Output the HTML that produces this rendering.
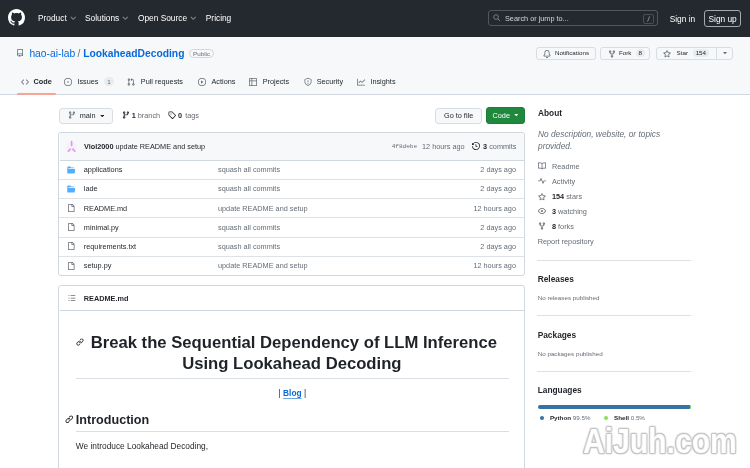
<!DOCTYPE html>
<html><head><meta charset="utf-8">
<style>
*{box-sizing:border-box;margin:0;padding:0}
html,body{width:750px;height:468px;overflow:hidden;background:#fff}
body{font-family:"Liberation Sans",sans-serif;color:#1f2328;position:relative}
#wrap{position:absolute;left:0;top:0;width:750px;height:468px;will-change:transform;filter:blur(0.3px)}
.a{position:absolute;white-space:nowrap}
svg{display:block}
#hdr{position:absolute;left:0;top:0;width:750px;height:37px;background:#24292f}
.nav{color:#fff;font-size:8.33px;top:13.4px}
.caret{position:absolute;top:0}
#rh{position:absolute;left:0;top:37px;width:750px;height:58px;background:#f6f8fa;border-bottom:1px solid #d0d7de}
.tab{font-size:7.3px;color:#1f2328;top:77.4px}
.btn{position:absolute;border:1px solid #d8dde3;background:#f6f8fa;border-radius:3px}
.cnt{position:absolute;background:#e8ebef;border-radius:6px;font-size:6.25px;text-align:center}
.row{position:absolute;left:59px;width:466px;height:19.1px;border-top:1px solid #d8dee4}
.fn{font-size:7.3px;color:#1f2328}
.cm{font-size:7.3px;color:#656d76}
.side{font-size:7.3px;color:#656d76}
.h2s{font-size:8.33px;font-weight:700;color:#1f2328}
.sm{font-size:6.25px;color:#656d76}
.div{position:absolute;left:537px;width:154px;height:1px;background:#dde1e6}
</style></head><body><div id="wrap">
<div id="hdr"></div>
<!-- github logo -->
<svg class="a" style="left:8px;top:9px" width="17" height="17" viewBox="0 0 16 16"><path fill="#fff" d="M8 0c4.42 0 8 3.58 8 8a8.013 8.013 0 0 1-5.45 7.590c-.4.08-.55-.17-.55-.38 0-.27.01-1.13.01-2.2 0-.75-.25-1.23-.54-1.48 1.78-.2 3.65-.88 3.65-3.95 0-.88-.31-1.59-.82-2.15.08-.2.36-1.02-.08-2.12 0 0-.67-.22-2.2.82-.64-.18-1.32-.27-2-.27-.68 0-1.36.09-2 .27-1.53-1.03-2.2-.82-2.2-.82-.44 1.1-.16 1.92-.08 2.12-.51.56-.82 1.28-.82 2.150 0 3.06 1.86 3.75 3.64 3.95-.23.2-.44.55-.51 1.07-.46.21-1.61.55-2.33-.66-.15-.24-.6-.83-1.23-.82-.67.01-.27.38.01.53.34.19.73.9.82 1.13.16.45.68 1.31 2.69.94 0 .67.01 1.3.01 1.49 0 .21-.15.45-.55.38A7.995 7.995 0 0 1 0 8c0-4.42 3.58-8 8-8Z"/></svg>
<span class="a nav" style="left:38px">Product</span>
<span class="a nav" style="left:85px">Solutions</span>
<span class="a nav" style="left:138px">Open Source</span>
<span class="a nav" style="left:205.8px">Pricing</span>

<!-- search -->
<div class="a" style="left:488px;top:10.3px;width:169.5px;height:16px;border:1px solid #4f5760;border-radius:3px"></div>
<span class="a" style="left:505px;top:14px;font-size:7.3px;color:#d0d7de">Search or jump to...</span>
<span class="a" style="left:669.7px;top:13.7px;font-size:8.33px;color:#fff">Sign in</span>
<div class="a" style="left:704.2px;top:9.8px;width:37.2px;height:17.6px;border:1px solid #a3a9b0;border-radius:3px"></div>
<span class="a" style="left:708.5px;top:13.7px;font-size:8.33px;color:#fff">Sign up</span>

<div id="rh"></div>
<span class="a" style="left:29.4px;top:47.7px;font-size:10.3px;color:#0969da">hao-ai-lab</span>
<span class="a" style="left:77.5px;top:47.7px;font-size:10.3px;color:#656d76">/</span>
<span class="a" style="left:83.2px;top:47.7px;font-size:10.3px;color:#0969da;font-weight:700">LookaheadDecoding</span>
<div class="a" style="left:189.4px;top:48.8px;width:24.4px;height:9.6px;border:1px solid #d0d7de;border-radius:5px;font-size:6.25px;color:#656d76;text-align:center;line-height:7.6px">Public</div>

<!-- tabs -->
<span class="a tab" style="left:33.6px;font-weight:700">Code</span>
<div class="a" style="left:16.5px;top:93.4px;width:39.7px;height:1.6px;background:#f4a596;border-radius:1px"></div>
<span class="a tab" style="left:77.4px">Issues</span>
<span class="a tab" style="left:140.8px">Pull requests</span>
<span class="a tab" style="left:211.5px">Actions</span>
<span class="a tab" style="left:262.7px">Projects</span>
<span class="a tab" style="left:316.7px">Security</span>
<span class="a tab" style="left:370.4px">Insights</span>

<!-- main -->
<div class="btn" style="left:58.5px;top:107.5px;width:54px;height:16px"></div>
<span class="a" style="left:79.7px;top:111px;font-size:7.3px;font-weight:400;color:#1f2328">main</span>
<span class="a" style="left:131.7px;top:111px;font-size:7.3px;font-weight:700">1</span>
<span class="a" style="left:137.8px;top:111px;font-size:7.3px;color:#656d76">branch</span>
<span class="a" style="left:178px;top:111px;font-size:7.3px;font-weight:700">0</span>
<span class="a" style="left:185.2px;top:111px;font-size:7.3px;color:#656d76">tags</span>

<div class="btn" style="left:435px;top:107.5px;width:46.5px;height:16px"></div>
<span class="a" style="left:444px;top:110.9px;font-size:7.3px">Go to file</span>
<div class="btn" style="left:486px;top:107px;width:39px;height:16.5px;background:#1f883d;border-color:#1b7f37"></div>
<span class="a" style="left:492.5px;top:110.9px;font-size:7.3px;color:#fff">Code</span>

<!-- commit box -->
<div class="a" style="left:58px;top:132.4px;width:467px;height:143.6px;border:1px solid #d0d7de;border-radius:3px"></div>
<div class="a" style="left:59.5px;top:133.4px;width:464.5px;height:27px;background:#f6f8fa;border-radius:3px 3px 0 0"></div>
<span class="a" style="left:84px;top:141.8px;font-size:7.3px;font-weight:700">Viol2000</span>
<span class="a" style="left:115.5px;top:141.8px;font-size:7.3px">update README and setup</span>
<span class="a" style="left:391.7px;top:142.6px;font-size:6.05px;color:#656d76;font-family:'Liberation Mono',monospace">4f8debe</span>
<span class="a" style="left:422px;top:141.8px;font-size:7.3px;color:#656d76">12 hours ago</span>
<span class="a" style="left:483px;top:141.8px;font-size:7.3px;font-weight:700">3</span>
<span class="a" style="left:489.2px;top:141.8px;font-size:7.3px;color:#656d76">commits</span>


<!-- nav carets -->
<svg class="a" style="left:69.7px;top:16.3px" width="6.6" height="4.4" viewBox="0 0 12 8"><path d="M1.5 1.5l4.5 4.5 4.5-4.5" fill="none" stroke="#7d858e" stroke-width="2"/></svg>
<svg class="a" style="left:122.2px;top:16.3px" width="6.6" height="4.4" viewBox="0 0 12 8"><path d="M1.5 1.5l4.5 4.5 4.5-4.5" fill="none" stroke="#7d858e" stroke-width="2"/></svg>
<svg class="a" style="left:190.2px;top:16.3px" width="6.6" height="4.4" viewBox="0 0 12 8"><path d="M1.5 1.5l4.5 4.5 4.5-4.5" fill="none" stroke="#7d858e" stroke-width="2"/></svg>
<!-- search icon -->
<svg class="a" style="left:493px;top:14.3px" width="7.5" height="7.5" viewBox="0 0 16 16"><circle cx="6.5" cy="6.5" r="5" fill="none" stroke="#8c959f" stroke-width="1.6"/><path d="M10.3 10.3l4.5 4.5" stroke="#8c959f" stroke-width="1.8"/></svg>
<div class="a" style="left:643px;top:14.3px;width:11px;height:9.3px;border:1px solid #474f58;border-radius:2px"></div>
<svg class="a" style="left:646px;top:16px" width="5" height="6" viewBox="0 0 5 6"><path d="M3.6 0.4L1.6 5.6" stroke="#8c959f" stroke-width="0.9"/></svg>
<!-- repo icon -->
<svg class="a" style="left:16.2px;top:49.3px" width="8" height="8" viewBox="0 0 16 16"><path fill="#656d76" d="M2 2.5A2.5 2.5 0 0 1 4.5 0h8.75a.75.75 0 0 1 .75.75v12.5a.75.75 0 0 1-.75.75h-2.5a.75.75 0 0 1 0-1.5h1.75v-2h-8a1 1 0 0 0-.714 1.700.75.75 0 1 1-1.072 1.050A2.495 2.495 0 0 1 2 11.500Zm10.5-1h-8a1 1 0 0 0-1 1v6.708A2.486 2.486 0 0 1 4.500 9h8ZM5 12.25a.25.25 0 0 1 .25-.25h3.5a.25.25 0 0 1 .25.25v3.250a.25.25 0 0 1-.4.200l-1.450-1.087a.249.249 0 0 0-.3 0L5.400 15.700a.25.25 0 0 1-.4-.2Z"/></svg>
<!-- right repo buttons -->
<div class="btn" style="left:536.2px;top:47px;width:59.5px;height:12.5px;border-radius:3px"></div>
<svg class="a" style="left:543.2px;top:49.5px" width="8" height="8" viewBox="0 0 16 16"><path fill="#656d76" d="M8 16a2 2 0 0 0 1.985-1.750c.017-.137-.097-.25-.235-.25h-3.500c-.138 0-.252.113-.235.250A2 2 0 0 0 8 16ZM3 5a5 5 0 0 1 10 0v2.947c0 .05.015.098.042.139l1.703 2.555A1.519 1.519 0 0 1 13.482 13H2.518a1.516 1.516 0 0 1-1.263-2.360l1.703-2.554A.255.255 0 0 0 3 7.947Zm5-3.500A3.500 3.500 0 0 0 4.500 5v2.947c0 .346-.102.683-.294.970l-1.703 2.556a.017.017 0 0 0-.003.010l.001.006c0 .002.002.004.004.006l.006.004.007.001h10.964l.007-.001.006-.004.004-.006.001-.007a.017.017 0 0 0-.003-.010l-1.703-2.554a1.745 1.745 0 0 1-.294-.970V5A3.500 3.500 0 0 0 8 1.500Z"/></svg>
<span class="a" style="left:555px;top:48.6px;font-size:6.25px;font-weight:400;color:#1f2328">Notifications</span>
<div class="btn" style="left:600.2px;top:47px;width:50.3px;height:12.5px"></div>
<svg class="a" style="left:607.7px;top:49.5px" width="8" height="8" viewBox="0 0 16 16"><path fill="#656d76" d="M5 5.372v.878c0 .414.336.75.75.75h4.500a.75.75 0 0 0 .75-.75v-.878a2.250 2.250 0 1 1 1.500 0v.878a2.250 2.250 0 0 1-2.250 2.250h-1.500v2.128a2.251 2.251 0 1 1-1.500 0V8.500h-1.500A2.250 2.250 0 0 1 3.500 6.250v-.878a2.250 2.250 0 1 1 1.500 0ZM5 3.250a.75.75 0 1 0-1.500 0 .75.75 0 0 0 1.500 0Zm6.750.75a.75.75 0 1 0 0-1.500.75.75 0 0 0 0 1.500Zm-3 8.750a.75.75 0 1 0-1.500 0 .75.75 0 0 0 1.500 0Z"/></svg>
<span class="a" style="left:618.9px;top:48.6px;font-size:6.25px;font-weight:400;color:#1f2328">Fork</span>
<div class="cnt" style="left:635.6px;top:48.8px;width:9.4px;height:8.5px;line-height:8.5px;color:#1f2328">8</div>
<div class="btn" style="left:656px;top:47px;width:77.3px;height:12.5px"></div>
<div class="a" style="left:716px;top:47px;width:1px;height:12.5px;background:#d8dde3"></div>
<svg class="a" style="left:663.4px;top:49.5px" width="8" height="8" viewBox="0 0 16 16"><path fill="#656d76" d="M8 .25a.75.75 0 0 1 .673.418l1.882 3.815 4.210.612a.75.75 0 0 1 .416 1.279l-3.046 2.970.719 4.192a.751.751 0 0 1-1.088.791L8 12.347l-3.766 1.980a.75.75 0 0 1-1.088-.790l.720-4.194L.818 6.374a.75.75 0 0 1 .416-1.280l4.210-.611L7.327.668A.75.75 0 0 1 8 .25Zm0 2.445L6.615 5.500a.75.75 0 0 1-.564.410l-3.097.45 2.240 2.184a.75.75 0 0 1 .216.664l-.528 3.084 2.769-1.456a.75.75 0 0 1 .698 0l2.770 1.456-.530-3.084a.75.75 0 0 1 .216-.664l2.240-2.183-3.096-.45a.75.75 0 0 1-.564-.41L8 2.694Z"/></svg>
<span class="a" style="left:676.6px;top:48.6px;font-size:6.25px;font-weight:400;color:#1f2328">Star</span>
<div class="cnt" style="left:692.8px;top:48.8px;width:16.1px;height:8.5px;line-height:8.5px;color:#1f2328">154</div>
<svg class="a" style="left:722.5px;top:52.2px" width="4" height="2.5" viewBox="0 0 10 6"><path d="M0 0h10L5 5.5z" fill="#656d76"/></svg>

<!-- tab icons -->
<svg class="a" style="left:20.8px;top:77.8px" width="8" height="8" viewBox="0 0 16 16"><path fill="#656d76" d="m11.28 3.22 4.25 4.25a.75.75 0 0 1 0 1.06l-4.25 4.25a.749.749 0 0 1-1.275-.326.749.749 0 0 1 .215-.734L13.94 8l-3.72-3.720a.749.749 0 0 1 .326-1.275.749.749 0 0 1 .734.215Zm-6.560 0a.751.751 0 0 1 1.042.018.751.751 0 0 1 .018 1.042L2.06 8l3.720 3.720a.749.749 0 0 1-.326 1.275.749.749 0 0 1-.734-.215L.47 8.530a.75.75 0 0 1 0-1.060Z"/></svg>
<svg class="a" style="left:64px;top:77.8px" width="8" height="8" viewBox="0 0 16 16"><path fill="#656d76" d="M8 9.5a1.5 1.5 0 1 0 0-3 1.5 1.5 0 0 0 0 3Z"/><path fill="#656d76" d="M8 0a8 8 0 1 1 0 16A8 8 0 0 1 8 0ZM1.5 8a6.5 6.5 0 1 0 13 0 6.5 6.5 0 0 0-13 0Z"/></svg>
<div class="cnt" style="left:104.2px;top:77.4px;width:9.4px;height:9px;line-height:9px;color:#656d76;background:#e8ebef">1</div>
<svg class="a" style="left:127px;top:77.8px" width="8" height="8" viewBox="0 0 16 16"><path fill="#656d76" d="M1.5 3.25a2.25 2.25 0 1 1 3 2.122v5.256a2.251 2.251 0 1 1-1.5 0V5.372A2.250 2.250 0 0 1 1.5 3.250Zm5.677-.177L9.573.677A.25.25 0 0 1 10 .854V2.500h1A2.500 2.500 0 0 1 13.500 5v5.628a2.251 2.251 0 1 1-1.500 0V5a1 1 0 0 0-1-1h-1v1.646a.25.25 0 0 1-.427.177L7.177 3.427a.25.25 0 0 1 0-.354ZM3.750 2.500a.75.75 0 1 0 0 1.500.75.75 0 0 0 0-1.500Zm0 9.500a.75.75 0 1 0 0 1.500.75.75 0 0 0 0-1.500Zm8.250.75a.75.75 0 1 0 1.500 0 .75.75 0 0 0-1.500 0Z"/></svg>
<svg class="a" style="left:197.7px;top:77.8px" width="8" height="8" viewBox="0 0 16 16"><path fill="#656d76" d="M8 0a8 8 0 1 1 0 16A8 8 0 0 1 8 0ZM1.5 8a6.5 6.5 0 1 0 13 0 6.5 6.5 0 0 0-13 0Zm4.879-2.773 4.264 2.559a.25.25 0 0 1 0 .428l-4.264 2.559A.25.25 0 0 1 6 10.559V5.442a.25.25 0 0 1 .379-.215Z"/></svg>
<svg class="a" style="left:249.2px;top:77.8px" width="8" height="8" viewBox="0 0 16 16"><path fill="#656d76" d="M0 1.75C0 .784.784 0 1.75 0h12.5C15.216 0 16 .784 16 1.75v12.5A1.75 1.75 0 0 1 14.25 16H1.75A1.75 1.75 0 0 1 0 14.25ZM6.5 6.5v8h7.75a.25.25 0 0 0 .25-.25V6.5Zm8-1.5V1.75a.25.25 0 0 0-.25-.25H6.5V5Zm-13 1.5v7.75c0 .138.112.25.25.25H5v-8ZM5 5V1.5H1.75a.25.25 0 0 0-.25.25V5Z"/></svg>
<svg class="a" style="left:303.5px;top:77.8px" width="8" height="8" viewBox="0 0 16 16"><path fill="#656d76" d="M7.467.133a1.748 1.748 0 0 1 1.066 0l5.250 1.680A1.750 1.750 0 0 1 15 3.480V7c0 1.566-.320 3.182-1.303 4.682-.983 1.498-2.585 2.813-5.032 3.855a1.697 1.697 0 0 1-1.330 0c-2.447-1.042-4.049-2.357-5.032-3.855C1.320 10.182 1 8.566 1 7V3.480a1.755 1.755 0 0 1 1.217-1.667Zm.61 1.429a.250.250 0 0 0-.153 0l-5.250 1.680a.250.250 0 0 0-.174.238V7c0 1.358.275 2.666 1.057 3.860.784 1.194 2.121 2.340 4.366 3.297a.196.196 0 0 0 .154 0c2.245-.956 3.582-2.104 4.366-3.298C13.225 9.666 13.500 8.360 13.500 7V3.480a.251.251 0 0 0-.174-.237l-5.250-1.680ZM8.750 4.750v3a.75.75 0 0 1-1.500 0v-3a.75.75 0 0 1 1.500 0ZM9 10.500a1 1 0 1 1-2 0 1 1 0 0 1 2 0Z"/></svg>
<svg class="a" style="left:356.6px;top:77.8px" width="8" height="8" viewBox="0 0 16 16"><path fill="#656d76" d="M1.5 1.75V13.500h13.750a.75.75 0 0 1 0 1.500H.75a.75.75 0 0 1-.75-.75V1.750a.75.75 0 0 1 1.500 0Zm14.280 2.530-5.250 5.250a.75.75 0 0 1-1.060 0L7 7.060 4.280 9.780a.751.751 0 0 1-1.042-.018.751.751 0 0 1-.018-1.042l3.250-3.250a.75.75 0 0 1 1.060 0L10 7.940l4.720-4.720a.751.751 0 0 1 1.042.018.751.751 0 0 1 .018 1.042Z"/></svg>


<!-- rows -->
<div class="a" style="left:59.5px;top:160.4px;width:464.5px;height:1px;background:#d0d7de"></div>
<svg class="a" style="left:67px;top:165.7px" width="8.5" height="8" viewBox="0 0 16 16"><path fill="#54aeff" d="M.513 1.513A1.750 1.750 0 0 1 1.750 1h3.500c.550 0 1.069.260 1.400.700l.900 1.200a.25.25 0 0 0 .2.1H13a1 1 0 0 1 1 1v.5H2.750a.75.75 0 0 0 0 1.500h11.978a1 1 0 0 1 .994 1.117L15 13.250A1.750 1.750 0 0 1 13.250 15H1.750A1.750 1.750 0 0 1 0 13.250V2.750c0-.464.184-.910.513-1.237Z"/></svg>
<span class="a fn" style="left:83.8px;top:165.4px">applications</span>
<span class="a cm" style="left:218px;top:165.4px">squash all commits</span>
<span class="a cm" style="right:234px;top:165.4px">2 days ago</span>
<div class="a" style="left:59px;top:179px;width:465px;height:1px;background:#dde2e7"></div>
<svg class="a" style="left:67px;top:184.7px" width="8.5" height="8" viewBox="0 0 16 16"><path fill="#54aeff" d="M.513 1.513A1.750 1.750 0 0 1 1.750 1h3.500c.550 0 1.069.260 1.400.700l.900 1.200a.25.25 0 0 0 .2.1H13a1 1 0 0 1 1 1v.5H2.750a.75.75 0 0 0 0 1.500h11.978a1 1 0 0 1 .994 1.117L15 13.250A1.750 1.750 0 0 1 13.250 15H1.750A1.750 1.750 0 0 1 0 13.250V2.750c0-.464.184-.910.513-1.237Z"/></svg>
<span class="a fn" style="left:83.8px;top:184.4px">lade</span>
<span class="a cm" style="left:218px;top:184.4px">squash all commits</span>
<span class="a cm" style="right:234px;top:184.4px">2 days ago</span>
<div class="a" style="left:59px;top:198px;width:465px;height:1px;background:#dde2e7"></div>
<svg class="a" style="left:67.3px;top:204.0px" width="8" height="8" viewBox="0 0 16 16"><path fill="#656d76" d="M2 1.750C2 .784 2.784 0 3.750 0h6.586c.464 0 .909.184 1.237.513l2.914 2.914c.329.328.513.773.513 1.237v9.586A1.750 1.750 0 0 1 13.250 16h-9.500A1.750 1.750 0 0 1 2 14.250Zm1.750-.25a.25.25 0 0 0-.25.25v12.500c0 .138.112.25.25.25h9.500a.25.25 0 0 0 .25-.25V6h-2.750A1.750 1.750 0 0 1 9 4.250V1.500Zm6.750.062V4.250c0 .138.112.25.25.25h2.688l-.011-.013-2.914-2.914-.013-.011Z"/></svg>
<span class="a fn" style="left:83.8px;top:203.7px">README.md</span>
<span class="a cm" style="left:218px;top:203.7px">update README and setup</span>
<span class="a cm" style="right:234px;top:203.7px">12 hours ago</span>
<div class="a" style="left:59px;top:217px;width:465px;height:1px;background:#dde2e7"></div>
<svg class="a" style="left:67.3px;top:223.0px" width="8" height="8" viewBox="0 0 16 16"><path fill="#656d76" d="M2 1.750C2 .784 2.784 0 3.750 0h6.586c.464 0 .909.184 1.237.513l2.914 2.914c.329.328.513.773.513 1.237v9.586A1.750 1.750 0 0 1 13.250 16h-9.500A1.750 1.750 0 0 1 2 14.250Zm1.750-.25a.25.25 0 0 0-.25.25v12.500c0 .138.112.25.25.25h9.500a.25.25 0 0 0 .25-.25V6h-2.750A1.750 1.750 0 0 1 9 4.250V1.500Zm6.750.062V4.250c0 .138.112.25.25.25h2.688l-.011-.013-2.914-2.914-.013-.011Z"/></svg>
<span class="a fn" style="left:83.8px;top:222.7px">minimal.py</span>
<span class="a cm" style="left:218px;top:222.7px">squash all commits</span>
<span class="a cm" style="right:234px;top:222.7px">2 days ago</span>
<div class="a" style="left:59px;top:237px;width:465px;height:1px;background:#dde2e7"></div>
<svg class="a" style="left:67.3px;top:242.4px" width="8" height="8" viewBox="0 0 16 16"><path fill="#656d76" d="M2 1.750C2 .784 2.784 0 3.750 0h6.586c.464 0 .909.184 1.237.513l2.914 2.914c.329.328.513.773.513 1.237v9.586A1.750 1.750 0 0 1 13.250 16h-9.500A1.750 1.750 0 0 1 2 14.250Zm1.750-.25a.25.25 0 0 0-.25.25v12.500c0 .138.112.25.25.25h9.500a.25.25 0 0 0 .25-.25V6h-2.750A1.750 1.750 0 0 1 9 4.250V1.500Zm6.750.062V4.250c0 .138.112.25.25.25h2.688l-.011-.013-2.914-2.914-.013-.011Z"/></svg>
<span class="a fn" style="left:83.8px;top:242.1px">requirements.txt</span>
<span class="a cm" style="left:218px;top:242.1px">squash all commits</span>
<span class="a cm" style="right:234px;top:242.1px">2 days ago</span>
<div class="a" style="left:59px;top:256px;width:465px;height:1px;background:#dde2e7"></div>
<svg class="a" style="left:67.3px;top:261.7px" width="8" height="8" viewBox="0 0 16 16"><path fill="#656d76" d="M2 1.750C2 .784 2.784 0 3.750 0h6.586c.464 0 .909.184 1.237.513l2.914 2.914c.329.328.513.773.513 1.237v9.586A1.750 1.750 0 0 1 13.250 16h-9.500A1.750 1.750 0 0 1 2 14.250Zm1.750-.25a.25.25 0 0 0-.25.25v12.500c0 .138.112.25.25.25h9.500a.25.25 0 0 0 .25-.25V6h-2.750A1.750 1.750 0 0 1 9 4.250V1.500Zm6.750.062V4.250c0 .138.112.25.25.25h2.688l-.011-.013-2.914-2.914-.013-.011Z"/></svg>
<span class="a fn" style="left:83.8px;top:261.4px">setup.py</span>
<span class="a cm" style="left:218px;top:261.4px">update README and setup</span>
<span class="a cm" style="right:234px;top:261.4px">12 hours ago</span>

<svg class="a" style="left:67.7px;top:111.3px" width="8" height="8" viewBox="0 0 16 16"><path fill="#656d76" d="M9.500 3.250a2.250 2.250 0 1 1 3 2.122V6A2.500 2.500 0 0 1 10 8.500H6a1 1 0 0 0-1 1v1.128a2.251 2.251 0 1 1-1.500 0V5.372a2.250 2.250 0 1 1 1.500 0v1.836A2.493 2.493 0 0 1 6 7h4a1 1 0 0 0 1-1v-.628A2.250 2.250 0 0 1 9.500 3.250Zm-6 0a.75.75 0 1 0 1.500 0 .75.75 0 0 0-1.500 0Zm8.250-.75a.75.75 0 1 0 0 1.500.75.75 0 0 0 0-1.500ZM4.250 12a.75.75 0 1 0 0 1.500.75.75 0 0 0 0-1.500Z"/></svg><svg class="a" style="left:121.5px;top:111.3px" width="8" height="8" viewBox="0 0 16 16"><path fill="#1f2328" d="M9.500 3.250a2.250 2.250 0 1 1 3 2.122V6A2.500 2.500 0 0 1 10 8.500H6a1 1 0 0 0-1 1v1.128a2.251 2.251 0 1 1-1.500 0V5.372a2.250 2.250 0 1 1 1.500 0v1.836A2.493 2.493 0 0 1 6 7h4a1 1 0 0 0 1-1v-.628A2.250 2.250 0 0 1 9.500 3.250Zm-6 0a.75.75 0 1 0 1.500 0 .75.75 0 0 0-1.500 0Zm8.250-.75a.75.75 0 1 0 0 1.500.75.75 0 0 0 0-1.500ZM4.250 12a.75.75 0 1 0 0 1.500.75.75 0 0 0 0-1.500Z"/></svg><svg class="a" style="left:99.5px;top:114.5px" width="4.5" height="2.5" viewBox="0 0 10 6"><path d="M0 0h10L5 5.5z" fill="#1f2328"/></svg><svg class="a" style="left:168.4px;top:111.3px" width="8" height="8" viewBox="0 0 16 16"><path fill="#1f2328" d="M1 7.775V2.750C1 1.784 1.784 1 2.750 1h5.025c.464 0 .910.184 1.238.513l6.250 6.250a1.750 1.750 0 0 1 0 2.474l-5.026 5.026a1.750 1.750 0 0 1-2.474 0l-6.250-6.250A1.752 1.752 0 0 1 1 7.775Zm1.500 0c0 .066.026.130.073.177l6.250 6.250a.25.25 0 0 0 .354 0l5.025-5.025a.25.25 0 0 0 0-.354l-6.250-6.250a.25.25 0 0 0-.177-.073H2.750a.25.25 0 0 0-.25.25ZM6 5a1 1 0 1 1 0 2 1 1 0 0 1 0-2Z"/></svg><svg class="a" style="left:514.3px;top:114.2px" width="4.5" height="2.5" viewBox="0 0 10 6"><path d="M0 0h10L5 5.5z" fill="#fff"/></svg><svg class="a" style="left:472px;top:142.3px" width="8" height="8" viewBox="0 0 16 16"><path fill="#1f2328" d="m.427 1.927 1.215 1.215a8.002 8.002 0 1 1-1.600 5.685.75.75 0 1 1 1.493-.154 6.500 6.500 0 1 0 1.180-4.458l1.358 1.358A.25.25 0 0 1 3.896 6H.25A.25.25 0 0 1 0 5.750V2.104a.25.25 0 0 1 .427-.177ZM7.750 4a.75.75 0 0 1 .75.75v2.992l2.028.812a.75.75 0 0 1-.557 1.392l-2.500-1A.751.751 0 0 1 7 8.250v-3.500A.75.75 0 0 1 7.750 4Z"/></svg><svg class="a" style="left:66px;top:139.5px" width="11" height="13" viewBox="0 0 11 13"><circle cx="5.5" cy="7" r="5.5" fill="#faf0fc"/><g stroke="#d49be6" stroke-width="1.6" stroke-linecap="round"><path d="M5.6 1.6v4"/><path d="M2.3 11.2l1.9-2.1"/><path d="M8.8 11.2l-1.9-2.1"/></g></svg>

<!-- readme box -->
<div class="a" style="left:58px;top:285.2px;width:467px;height:200px;border:1px solid #d0d7de;border-radius:3px"></div>
<div class="a" style="left:59.5px;top:310px;width:464.5px;height:1px;background:#d0d7de"></div>
<svg class="a" style="left:67.5px;top:294px" width="8" height="8" viewBox="0 0 16 16"><path fill="#656d76" d="M5.750 2.500h8.500a.75.75 0 0 1 0 1.500h-8.500a.75.75 0 0 1 0-1.500Zm0 5h8.500a.75.75 0 0 1 0 1.500h-8.500a.75.75 0 0 1 0-1.500Zm0 5h8.500a.75.75 0 0 1 0 1.500h-8.500a.75.75 0 0 1 0-1.500ZM2 14a1 1 0 1 1 0-2 1 1 0 0 1 0 2Zm1-6a1 1 0 1 1-2 0 1 1 0 0 1 2 0ZM2 4a1 1 0 1 1 0-2 1 1 0 0 1 0 2Z"/></svg>
<span class="a" style="left:83.8px;top:293.8px;font-size:7.3px;font-weight:700">README.md</span>
<svg class="a" style="left:75.6px;top:337.6px" width="8" height="8" viewBox="0 0 16 16"><path fill="#1f2328" d="m7.775 3.275 1.250-1.250a3.500 3.500 0 1 1 4.950 4.950l-2.500 2.500a3.500 3.500 0 0 1-4.950 0 .751.751 0 0 1 .018-1.042.751.751 0 0 1 1.042-.018 1.998 1.998 0 0 0 2.830 0l2.500-2.500a2.002 2.002 0 0 0-2.830-2.830l-1.250 1.250a.751.751 0 0 1-1.042-.018.751.751 0 0 1-.018-1.042Zm-4.690 9.640a1.998 1.998 0 0 0 2.830 0l1.250-1.250a.751.751 0 0 1 1.042.018.751.751 0 0 1 .018 1.042l-1.250 1.250a3.500 3.500 0 1 1-4.950-4.950l2.500-2.500a3.500 3.500 0 0 1 4.950 0 .751.751 0 0 1-.018 1.042.751.751 0 0 1-1.042.018 1.998 1.998 0 0 0-2.830 0l-2.500 2.500a1.998 1.998 0 0 0 0 2.830Z"/></svg>
<span class="a" style="left:90.7px;top:333px;font-size:16.67px;font-weight:700">Break the Sequential Dependency of LLM Inference</span>
<span class="a" style="left:182.2px;top:353.8px;font-size:16.67px;font-weight:700">Using Lookahead Decoding</span>
<div class="a" style="left:76px;top:378px;width:432.5px;height:1px;background:#d8dee4"></div>
<span class="a" style="left:278.6px;top:388.2px;font-size:8.33px;color:#1f2328">| <span style="color:#0969da;font-weight:700;text-decoration:underline;text-decoration-thickness:0.6px;text-underline-offset:1.6px;text-decoration-color:#6ea8e8">Blog</span> |</span>
<svg class="a" style="left:65px;top:415px" width="8.5" height="8.5" viewBox="0 0 16 16"><path fill="#1f2328" d="m7.775 3.275 1.250-1.250a3.500 3.500 0 1 1 4.950 4.950l-2.500 2.500a3.500 3.500 0 0 1-4.950 0 .751.751 0 0 1 .018-1.042.751.751 0 0 1 1.042-.018 1.998 1.998 0 0 0 2.830 0l2.500-2.500a2.002 2.002 0 0 0-2.830-2.830l-1.250 1.250a.751.751 0 0 1-1.042-.018.751.751 0 0 1-.018-1.042Zm-4.690 9.640a1.998 1.998 0 0 0 2.830 0l1.250-1.250a.751.751 0 0 1 1.042.018.751.751 0 0 1 .018 1.042l-1.250 1.250a3.500 3.500 0 1 1-4.950-4.950l2.500-2.500a3.500 3.500 0 0 1 4.950 0 .751.751 0 0 1-.018 1.042.751.751 0 0 1-1.042.018 1.998 1.998 0 0 0-2.830 0l-2.500 2.500a1.998 1.998 0 0 0 0 2.830Z"/></svg>
<span class="a" style="left:75.8px;top:412.8px;font-size:12.6px;font-weight:700">Introduction</span>
<div class="a" style="left:76px;top:431px;width:432.5px;height:1px;background:#d8dee4"></div>
<span class="a" style="left:75.8px;top:441.3px;font-size:8.33px">We introduce Lookahead Decoding,</span>

<!-- sidebar -->
<span class="a h2s" style="left:538px;top:108.2px">About</span>
<div class="a" style="left:538px;top:127.5px;font-size:8.33px;font-style:italic;color:#656d76;line-height:12.7px;white-space:normal;width:150px">No description, website, or topics provided.</div>
<svg class="a" style="left:537.7px;top:162.2px" width="8" height="8" viewBox="0 0 16 16"><path fill="#656d76" d="M0 1.750A.75.75 0 0 1 .75 1h4.253c1.227 0 2.317.590 3 1.501A3.743 3.743 0 0 1 11.006 1h4.245a.75.75 0 0 1 .75.75v10.500a.75.75 0 0 1-.75.75h-4.507a2.250 2.250 0 0 0-1.591.659l-.622.621a.75.75 0 0 1-1.060 0l-.622-.621A2.250 2.250 0 0 0 5.258 13H.75a.75.75 0 0 1-.75-.75Zm7.251 10.324.004-5.073-.002-2.253A2.250 2.250 0 0 0 5.003 2.500H1.500v9h3.757a3.750 3.750 0 0 1 1.994.574ZM8.755 4.750l-.004 7.322a3.752 3.752 0 0 1 1.992-.572H14.500v-9h-3.495a2.250 2.250 0 0 0-2.250 2.250Z"/></svg>
<span class="a side" style="left:552px;top:161.6px">Readme</span>
<svg class="a" style="left:537.7px;top:177.4px" width="8" height="8" viewBox="0 0 16 16"><path fill="#656d76" d="M6 2c.306 0 .582.187.696.471L10 10.731l1.304-3.260A.751.751 0 0 1 12 7h3.250a.75.75 0 0 1 0 1.500h-2.742l-1.812 4.528a.751.751 0 0 1-1.392 0L6 4.770 4.696 8.030A.75.75 0 0 1 4 8.500H.75a.75.75 0 0 1 0-1.500h2.742l1.812-4.529A.751.751 0 0 1 6 2Z"/></svg>
<span class="a side" style="left:552px;top:177.2px">Activity</span>
<svg class="a" style="left:537.7px;top:192.6px" width="8" height="8" viewBox="0 0 16 16"><path fill="#656d76" d="M8 .25a.75.75 0 0 1 .673.418l1.882 3.815 4.210.612a.75.75 0 0 1 .416 1.279l-3.046 2.970.719 4.192a.751.751 0 0 1-1.088.791L8 12.347l-3.766 1.980a.75.75 0 0 1-1.088-.790l.720-4.194L.818 6.374a.75.75 0 0 1 .416-1.280l4.210-.611L7.327.668A.75.75 0 0 1 8 .25Zm0 2.445L6.615 5.500a.75.75 0 0 1-.564.410l-3.097.45 2.240 2.184a.75.75 0 0 1 .216.664l-.528 3.084 2.769-1.456a.75.75 0 0 1 .698 0l2.770 1.456-.530-3.084a.75.75 0 0 1 .216-.664l2.240-2.183-3.096-.45a.75.75 0 0 1-.564-.41L8 2.694Z"/></svg>
<span class="a side" style="left:552px;top:192.4px"><b style="color:#1f2328">154</b> stars</span>
<svg class="a" style="left:537.7px;top:207.4px" width="8" height="8" viewBox="0 0 16 16"><path fill="#656d76" d="M8 2c1.981 0 3.671.992 4.933 2.078 1.270 1.091 2.187 2.345 2.637 3.023a1.620 1.620 0 0 1 0 1.798c-.450.678-1.367 1.932-2.637 3.023C11.670 13.008 9.981 14 8 14c-1.981 0-3.671-.992-4.933-2.078C1.797 10.830.880 9.576.430 8.898a1.620 1.620 0 0 1 0-1.798c.450-.677 1.367-1.931 2.637-3.022C4.330 2.992 6.019 2 8 2ZM1.679 7.932a.120.120 0 0 0 0 .136c.411.622 1.241 1.750 2.366 2.717C5.176 11.758 6.527 12.500 8 12.500c1.473 0 2.825-.742 3.955-1.715 1.124-.967 1.954-2.096 2.366-2.717a.120.120 0 0 0 0-.136c-.412-.621-1.242-1.750-2.366-2.717C10.824 4.242 9.473 3.500 8 3.500c-1.473 0-2.825.742-3.955 1.715-1.124.967-1.954 2.096-2.366 2.717ZM8 10a2 2 0 1 1-.001-3.999A2 2 0 0 1 8 10Z"/></svg>
<span class="a side" style="left:552px;top:207.2px"><b style="color:#1f2328">3</b> watching</span>
<svg class="a" style="left:537.7px;top:222.4px" width="8" height="8" viewBox="0 0 16 16"><path fill="#656d76" d="M5 5.372v.878c0 .414.336.75.75.75h4.500a.75.75 0 0 0 .75-.75v-.878a2.250 2.250 0 1 1 1.500 0v.878a2.250 2.250 0 0 1-2.250 2.250h-1.500v2.128a2.251 2.251 0 1 1-1.500 0V8.500h-1.500A2.250 2.250 0 0 1 3.500 6.250v-.878a2.250 2.250 0 1 1 1.500 0ZM5 3.250a.75.75 0 1 0-1.500 0 .75.75 0 0 0 1.500 0Zm6.750.75a.75.75 0 1 0 0-1.500.75.75 0 0 0 0 1.500Zm-3 8.750a.75.75 0 1 0-1.500 0 .75.75 0 0 0 1.500 0Z"/></svg>
<span class="a side" style="left:552px;top:222.2px"><b style="color:#1f2328">8</b> forks</span>
<span class="a side" style="left:537.7px;top:236.9px">Report repository</span>
<div class="div" style="top:260.3px"></div>
<span class="a h2s" style="left:537.7px;top:273.8px">Releases</span>
<span class="a sm" style="left:537.7px;top:294.1px">No releases published</span>
<div class="div" style="top:315.4px"></div>
<span class="a h2s" style="left:537.7px;top:330px">Packages</span>
<span class="a sm" style="left:537.7px;top:350.2px">No packages published</span>
<div class="div" style="top:371.3px"></div>
<span class="a h2s" style="left:537.7px;top:385.2px">Languages</span>
<div class="a" style="left:537.5px;top:405.1px;width:153px;height:3.7px;border-radius:2px;background:#3572a5;overflow:hidden"><div style="position:absolute;right:0;top:0;width:1px;height:100%;background:#89e051"></div></div>
<div class="a" style="left:539.8px;top:415.7px;width:4px;height:4px;border-radius:50%;background:#3572a5"></div>
<span class="a sm" style="left:549.9px;top:414.1px"><b style="color:#1f2328">Python</b> 99.5%</span>
<div class="a" style="left:604px;top:415.8px;width:4px;height:4px;border-radius:50%;background:#89e051"></div>
<span class="a sm" style="left:614px;top:414.1px"><b style="color:#1f2328">Shell</b> 0.5%</span>

<!-- watermark -->
<span class="a" style="left:582.5px;top:421px;font-size:35px;font-weight:700;color:#fff;transform-origin:0 0;transform:scaleX(0.86);text-shadow:1.30px 0.00px 0.8px #c6c6c6,1.13px 0.65px 0.8px #c6c6c6,0.65px 1.13px 0.8px #c6c6c6,0.00px 1.30px 0.8px #c6c6c6,-0.65px 1.13px 0.8px #c6c6c6,-1.13px 0.65px 0.8px #c6c6c6,-1.30px 0.00px 0.8px #c6c6c6,-1.13px -0.65px 0.8px #c6c6c6,-0.65px -1.13px 0.8px #c6c6c6,-0.00px -1.30px 0.8px #c6c6c6,0.65px -1.13px 0.8px #c6c6c6,1.13px -0.65px 0.8px #c6c6c6,0 0 3px #d0d0d0">AiJuh.com</span>

</div></body></html>
